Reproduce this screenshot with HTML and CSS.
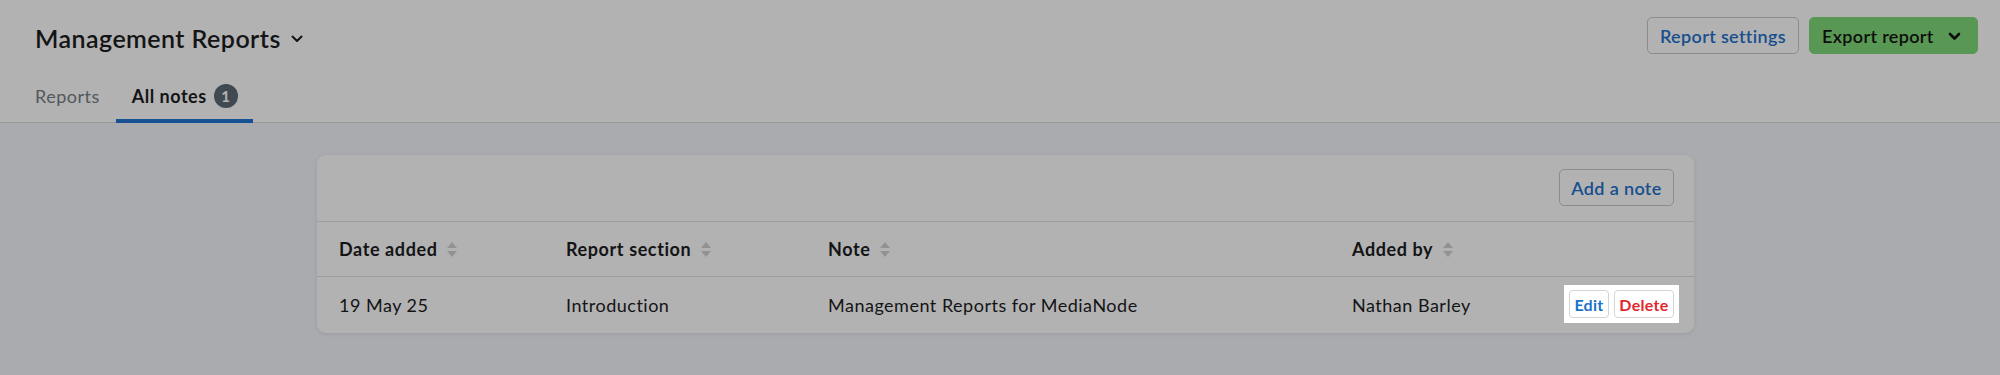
FILE: index.html
```html
<!DOCTYPE html>
<html lang="en">
<head>
<meta charset="utf-8">
<title>Management Reports – All notes</title>
<link rel="stylesheet" href="styles.css">
</head>
<body>
<header class="page-header">
  <div class="title-row">
    <h1 class="title">Management Reports
      <svg class="title-chevron" width="12" height="8" viewBox="0 0 12 8"><path d="M1.5 1.5 L6 6 L10.5 1.5" fill="none" stroke="#1d1d1f" stroke-width="2" stroke-linecap="round" stroke-linejoin="round"/></svg>
    </h1>
    <div class="header-actions">
      <button class="btn btn-outline btn-settings">Report settings</button>
      <button class="btn btn-green">Export report
        <svg class="btn-chevron" width="13" height="9" viewBox="0 0 13 9"><path d="M2 2 L6.5 6.5 L11 2" fill="none" stroke="#111" stroke-width="2.6" stroke-linecap="round" stroke-linejoin="round"/></svg>
      </button>
    </div>
  </div>
  <nav class="tabs">
    <a class="tab">Reports</a>
    <a class="tab tab-active">All notes <span class="badge">1</span></a>
  </nav>
</header>

<main class="main">
  <section class="card">
    <div class="card-toolbar">
      <button class="btn btn-outline btn-add">Add a note</button>
    </div>
    <div class="grid grid-head">
      <div class="th">Date added <span class="sort"></span></div>
      <div class="th">Report section <span class="sort"></span></div>
      <div class="th">Note <span class="sort"></span></div>
      <div class="th">Added by <span class="sort"></span></div>
      <div class="th"></div>
    </div>
    <div class="grid grid-row">
      <div class="td">19 May 25</div>
      <div class="td">Introduction</div>
      <div class="td">Management Reports for MediaNode</div>
      <div class="td">Nathan Barley</div>
      <div class="td td-actions">
        <div class="spotlight">
          <button class="btn-sm btn-edit">Edit</button>
          <button class="btn-sm btn-delete">Delete</button>
        </div>
      </div>
    </div>
  </section>
</main>
</body>
</html>
```
FILE: styles.css
```css
* { box-sizing: border-box; }

html, body {
  margin: 0;
  padding: 0;
}

body {
  font-family: "Lato", "Liberation Sans", sans-serif;
  background: #f3f5fb;
  color: #1d1d1f;
  width: 2000px;
  height: 375px;
  overflow: hidden;
  letter-spacing: 0.5px;
}

button {
  font-family: inherit;
  letter-spacing: inherit;
  cursor: pointer;
}

/* Header */
.page-header {
  background: #ffffff;
  border-bottom: 1px solid #dcdcdc;
  padding: 17px 22px 0 35px;
  height: 123px;
}

.title-row {
  display: flex;
  align-items: center;
  justify-content: space-between;
  height: 37px;
}

.title {
  margin: 0;
  font-size: 25px;
  font-weight: 600;
  letter-spacing: 0.45px;
  display: flex;
  align-items: center;
  gap: 10px;
  color: #1d1d1f;
  position: relative;
  top: 2px;
}

.title-chevron { margin-top: 2px; }

.header-actions {
  display: flex;
  gap: 10px;
}

.btn {
  height: 37px;
  border-radius: 5px;
  font-size: 18px;
  font-weight: 600;
  letter-spacing: 0.35px;
  padding: 0;
  display: inline-flex;
  align-items: center;
  justify-content: center;
}

.btn-outline {
  background: #ffffff;
  border: 1px solid #c9c9c9;
  color: #1f72cc;
}

.btn-settings { width: 152px; }
.btn-add { width: 115px; }

.btn-green {
  background: #80d879;
  border: 1px solid #80d879;
  color: #141414;
  padding: 0 16px 0 12px;
  justify-content: space-between;
  width: 169px;
}

.btn-chevron { margin-top: 1px; }

/* Tabs */
.tabs {
  display: flex;
  margin: 17px 0 0 -16px;
}

.tab {
  display: flex;
  align-items: center;
  gap: 7px;
  height: 52px;
  padding: 1px 16px 0;
  font-size: 18px;
  color: #787e86;
  border-bottom: 4px solid transparent;
  text-decoration: none;
}

.tab-active {
  color: #1d1d1f;
  font-weight: 700;
  border-bottom-color: #1f74d3;
  padding-right: 15px;
}

.badge {
  width: 24px;
  height: 24px;
  border-radius: 50%;
  background: #5c6774;
  color: #ffffff;
  font-size: 15px;
  font-weight: 700;
  letter-spacing: 0;
  display: inline-flex;
  align-items: center;
  justify-content: center;
}

/* Main */
.main {
  padding: 32px 306px 0 317px;
}

.card {
  background: #ffffff;
  border-radius: 9px;
  box-shadow: 0 1px 4px rgba(40, 50, 80, 0.10);
}

.card-toolbar {
  display: flex;
  justify-content: flex-end;
  padding: 14px 20px 15px;
  border-bottom: 1px solid #e1e1e1;
}

.grid {
  display: grid;
  grid-template-columns: 227px 262px 524px 1fr auto;
  align-items: center;
  padding: 0 15px 0 22px;
  font-size: 18px;
}

.grid-head {
  height: 55px;
  border-bottom: 1px solid #e1e1e1;
}

.grid-row {
  height: 56px;
}

.th {
  font-weight: 700;
  letter-spacing: 0.6px;
  display: flex;
  align-items: center;
  gap: 10px;
}

.sort {
  display: inline-block;
  width: 10px;
  height: 15px;
  position: relative;
}

.sort::before,
.sort::after {
  content: "";
  position: absolute;
  left: 0;
  border-left: 5px solid transparent;
  border-right: 5px solid transparent;
}

.sort::before {
  top: 0;
  border-bottom: 6px solid #d2d2d2;
}

.sort::after {
  bottom: 0;
  border-top: 6px solid #d2d2d2;
}

.td { color: #1d1d1f; }

.td-actions {
  display: flex;
  justify-content: flex-end;
}

.spotlight {
  position: relative;
  z-index: 10;
  background: #ffffff;
  padding: 5px;
  display: flex;
  gap: 5px;
  box-shadow: 0 0 0 4000px rgba(0, 0, 0, 0.3);
  margin-top: -2px;
}

.btn-sm {
  height: 28px;
  border: 1px solid #d4d4d4;
  border-radius: 4px;
  background: #ffffff;
  font-size: 16px;
  font-weight: 700;
  letter-spacing: 0.3px;
  padding: 0;
}

.btn-edit { color: #1a72c9; width: 40px; }
.btn-delete { color: #e1272d; width: 60px; }
```
